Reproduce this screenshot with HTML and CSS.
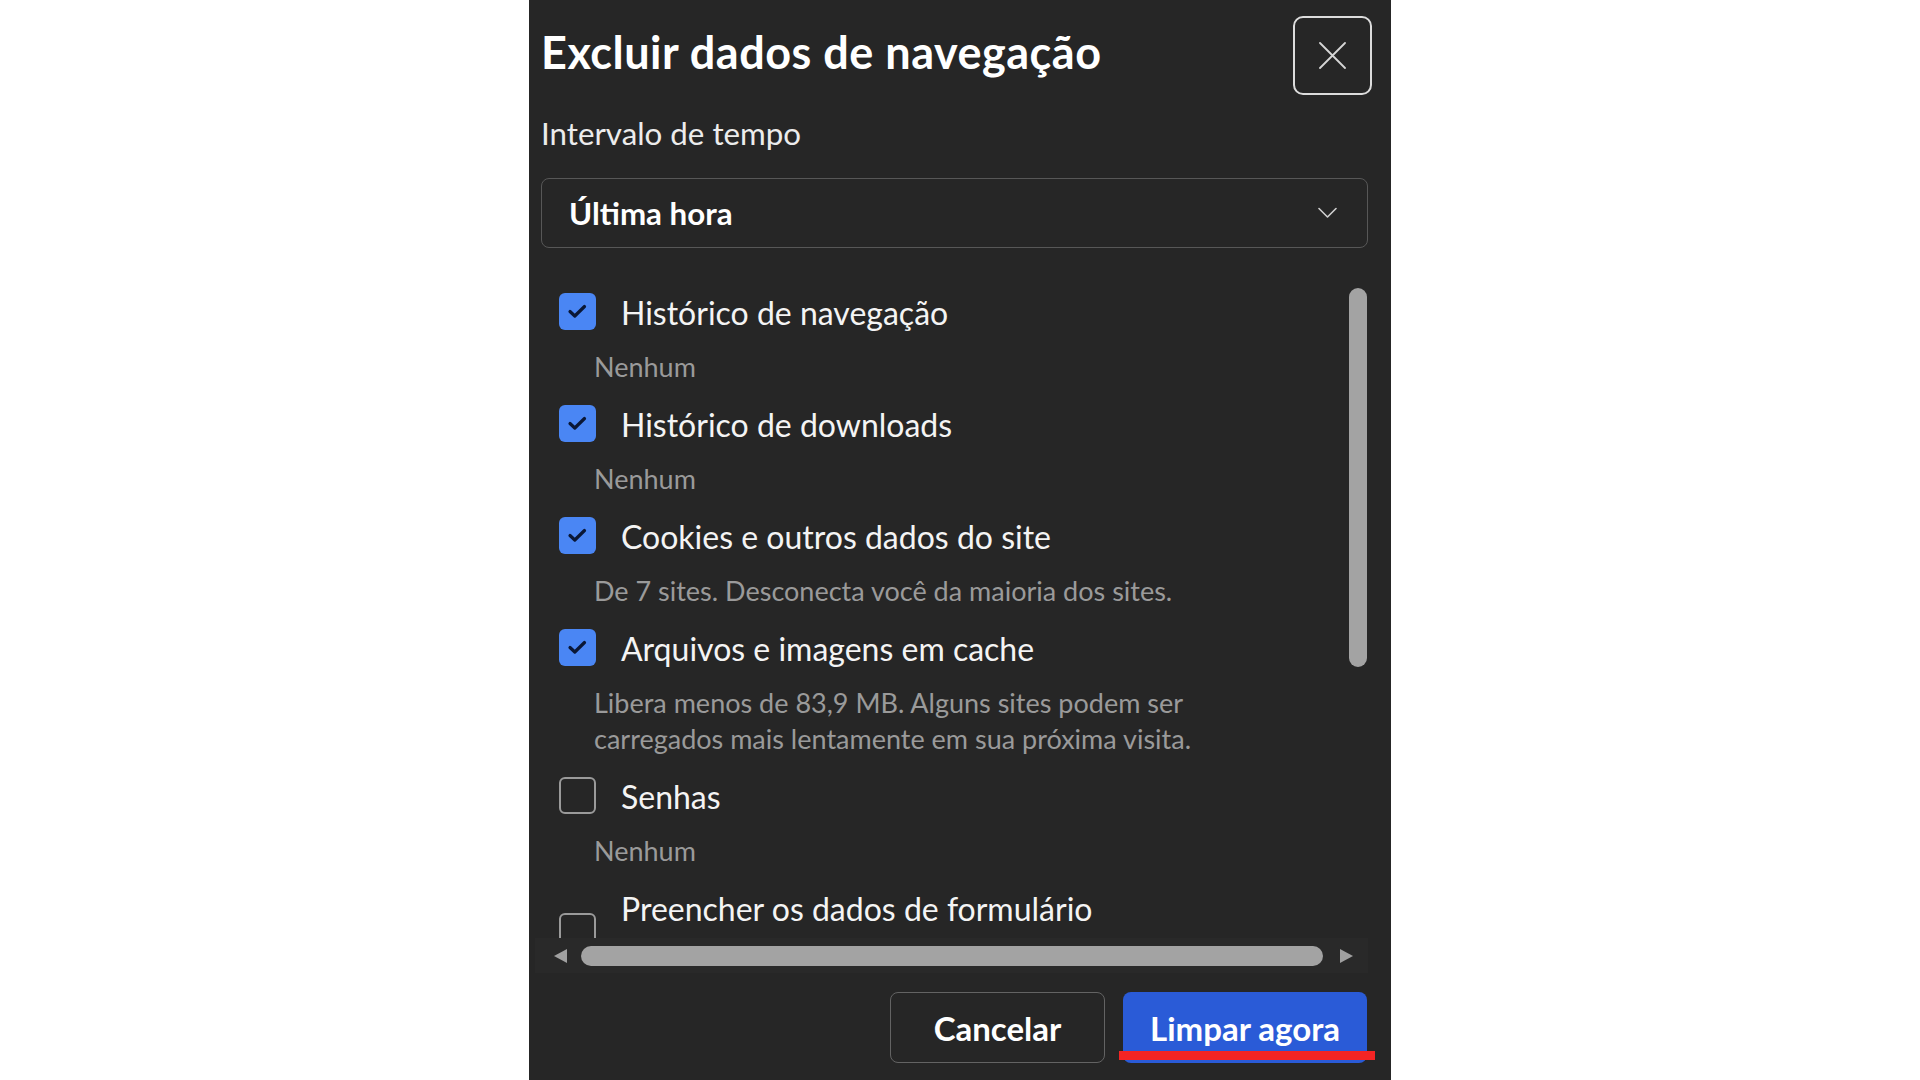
FILE: index.html
```html
<!DOCTYPE html>
<html lang="pt-BR">
<head>
<meta charset="utf-8">
<title>Excluir dados de navegação</title>
<link rel="stylesheet" href="styles.css">
</head>
<body>
<div class="dialog">
  <header class="head">
    <h1 class="title">Excluir dados de navegação</h1>
    <button class="close" aria-label="Fechar">
      <svg width="27" height="27" viewBox="0 0 27 27"><path d="M1 1 L26 26 M26 1 L1 26" stroke="#d6d6d6" stroke-width="1.8" fill="none" stroke-linecap="round"/></svg>
    </button>
  </header>

  <div class="field-label">Intervalo de tempo</div>
  <div class="select">
    <span class="select-value">Última hora</span>
    <svg width="19" height="12" viewBox="0 0 19 12"><polyline points="1,1.5 9.5,10 18,1.5" fill="none" stroke="#cfcfcf" stroke-width="1.6" stroke-linecap="round" stroke-linejoin="round"/></svg>
  </div>

  <div class="scroll">
    <div class="list">
      <div class="item">
        <div class="row">
          <span class="cb checked"><svg width="37" height="37" viewBox="0 0 37 37"><path d="M11 18.5 L15.8 23 L25.5 13.5" fill="none" stroke="#0a1736" stroke-width="3.2" stroke-linecap="round" stroke-linejoin="round"/></svg></span>
          <span class="label">Histórico de navegação</span>
        </div>
        <div class="desc">Nenhum</div>
      </div>
      <div class="item">
        <div class="row">
          <span class="cb checked"><svg width="37" height="37" viewBox="0 0 37 37"><path d="M11 18.5 L15.8 23 L25.5 13.5" fill="none" stroke="#0a1736" stroke-width="3.2" stroke-linecap="round" stroke-linejoin="round"/></svg></span>
          <span class="label">Histórico de downloads</span>
        </div>
        <div class="desc">Nenhum</div>
      </div>
      <div class="item">
        <div class="row">
          <span class="cb checked"><svg width="37" height="37" viewBox="0 0 37 37"><path d="M11 18.5 L15.8 23 L25.5 13.5" fill="none" stroke="#0a1736" stroke-width="3.2" stroke-linecap="round" stroke-linejoin="round"/></svg></span>
          <span class="label">Cookies e outros dados do site</span>
        </div>
        <div class="desc">De 7 sites. Desconecta você da maioria dos sites.</div>
      </div>
      <div class="item">
        <div class="row">
          <span class="cb checked"><svg width="37" height="37" viewBox="0 0 37 37"><path d="M11 18.5 L15.8 23 L25.5 13.5" fill="none" stroke="#0a1736" stroke-width="3.2" stroke-linecap="round" stroke-linejoin="round"/></svg></span>
          <span class="label">Arquivos e imagens em cache</span>
        </div>
        <div class="desc">Libera menos de 83,9 MB. Alguns sites podem ser<br>carregados mais lentamente em sua próxima visita.</div>
      </div>
      <div class="item">
        <div class="row">
          <span class="cb"></span>
          <span class="label">Senhas</span>
        </div>
        <div class="desc">Nenhum</div>
      </div>
      <div class="item item-last">
        <div class="row">
          <span class="cb cb-low"></span>
          <span class="label">Preencher os dados de formulário</span>
        </div>
      </div>
    </div>
    <div class="vbar"><div class="vthumb"></div></div>
  </div>

  <div class="hbar">
    <span class="arrow arrow-left"></span>
    <div class="hthumb"></div>
    <span class="arrow arrow-right"></span>
  </div>

  <div class="actions">
    <button class="btn">Cancelar</button>
    <button class="btn primary">Limpar agora<span class="mark"></span></button>
  </div>
</div>
</body>
</html>
```

FILE: styles.css
```css
* { box-sizing: border-box; }

html, body {
  margin: 0;
  padding: 0;
}

body {
  background: #ffffff;
  height: 1080px;
  overflow: hidden;
  display: flex;
  justify-content: center;
  font-family: "Lato", "Open Sans", "Liberation Sans", sans-serif;
  color: #f2f2f2;
}

.dialog {
  width: 862px;
  height: 1080px;
  background: #262626;
  padding: 0 23px 0 12px;
  display: flex;
  flex-direction: column;
  overflow: hidden;
}

.head {
  display: flex;
  justify-content: space-between;
  align-items: flex-start;
  padding-top: 16px;
  height: 95px;
}

.title {
  margin: 8px 0 0 0;
  font-size: 45px;
  line-height: 56px;
  font-weight: 700;
  color: #ffffff;
  letter-spacing: 0.5px;
}

.close {
  width: 79px;
  height: 79px;
  margin-right: -4px;
  border: 2px solid #dcdcdc;
  border-radius: 10px;
  background: transparent;
  display: flex;
  align-items: center;
  justify-content: center;
  padding: 0;
}

.field-label {
  margin-top: 18px;
  font-size: 31.3px;
  line-height: 40px;
  color: #ececec;
}

.select {
  margin-top: 25px;
  height: 70px;
  border: 1px solid #575757;
  border-radius: 8px;
  padding: 0 30px 0 27px;
  display: flex;
  align-items: center;
  justify-content: space-between;
}

.select-value {
  font-size: 31.3px;
  line-height: 40px;
  font-weight: 700;
  color: #ffffff;
}

.scroll {
  margin-top: 20px;
  height: 670px;
  display: flex;
  overflow: hidden;
}

.list {
  flex: 1;
  padding: 25px 0 0 18px;
}

.item {
  margin-bottom: 20px;
}

.row {
  display: flex;
  align-items: flex-start;
}

.cb {
  width: 37px;
  height: 37px;
  flex: none;
  border-radius: 6px;
  border: 2px solid #9a9a9a;
  display: block;
}

.cb.checked {
  background: #4a86f4;
  border: none;
}

.cb svg { display: block; }

.cb-low { margin-top: 24px; }

.label {
  margin-left: 25px;
  font-size: 32px;
  line-height: 40px;
  color: #f4f4f4;
}

.desc {
  margin: 16px 0 0 35px;
  font-size: 27px;
  line-height: 36px;
  color: #9a9a9a;
}

.vbar {
  width: 19px;
  flex: none;
}

.vthumb {
  margin-top: 20px;
  width: 18px;
  height: 379px;
  border-radius: 9px;
  background: #a3a3a3;
}

.hbar {
  height: 35px;
  margin-left: -6px;
  background: #292929;
  display: flex;
  align-items: center;
  padding: 0 15px 0 19px;
}

.arrow {
  width: 0;
  height: 0;
  border-top: 7.5px solid transparent;
  border-bottom: 7.5px solid transparent;
  flex: none;
}

.arrow-left { border-right: 13px solid #a0a0a0; }
.arrow-right { border-left: 13px solid #a0a0a0; }

.hthumb {
  flex: 1;
  height: 20px;
  margin: 0 17px 0 14px;
  border-radius: 10px;
  background: #a3a3a3;
}

.actions {
  margin-top: 19px;
  display: flex;
  justify-content: flex-end;
  gap: 18px;
}

.btn {
  height: 71px;
  width: 215px;
  border: 1px solid #636363;
  border-radius: 8px;
  background: transparent;
  color: #ffffff;
  font-family: "Lato", "Open Sans", "Liberation Sans", sans-serif;
  font-size: 33px;
  font-weight: 700;
  padding: 0;
}

.btn.primary {
  width: 244px;
  margin-right: 1px;
  border: none;
  background: #2a5bd7;
  position: relative;
}

.mark {
  position: absolute;
  left: -4px;
  top: 59px;
  width: 256px;
  height: 9px;
  background: #f42424;
}
```
